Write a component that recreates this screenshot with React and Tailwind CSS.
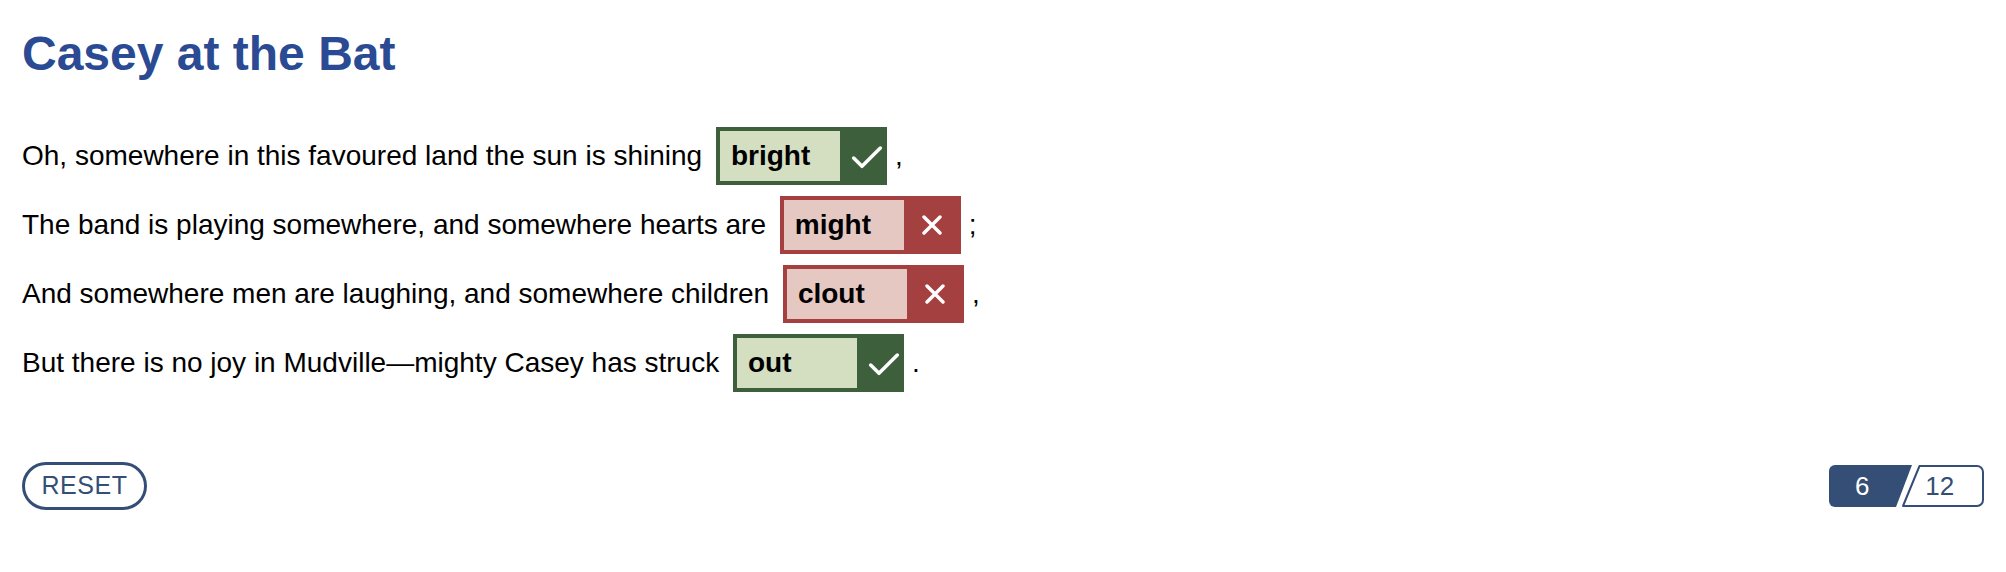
import React from 'react';
import { Check } from 'lucide-react';

const lines = [
  { before: 'Oh, somewhere in this favoured land the sun is shining', word: 'bright', correct: true, after: ',' },
  { before: 'The band is playing somewhere, and somewhere hearts are', word: 'might', correct: false, after: ';' },
  { before: 'And somewhere men are laughing, and somewhere children', word: 'clout', correct: false, after: ',' },
  { before: 'But there is no joy in Mudville\u2014mighty Casey has struck', word: 'out', correct: true, after: '.' },
];

const CrossMark = () => (
  <svg width="20" height="20" viewBox="0 0 20 20" className="shrink-0 ml-[18px]">
    <path d="M2 2 L18 18 M18 2 L2 18" fill="none" stroke="white" strokeWidth="3.4" strokeLinecap="round" />
  </svg>
);

const Blank = ({ word, correct }) => {
  const tone = correct
    ? 'border-[#3e5f3c] bg-[#3e5f3c]'
    : 'border-[#a54040] bg-[#a54040]';
  const fill = correct ? 'bg-[#d4dec0]' : 'bg-[#e5c8c2]';

  return (
    <div className={`flex h-[58px] ml-[6px] mr-[8px] border-4 border-r-0 ${tone}`}>
      <div className={`w-[120px] h-[50px] flex items-center pl-[11px] font-bold text-black ${fill}`}>
        {word}
      </div>
      <div className={`flex items-center ${correct ? 'w-[47px]' : 'w-[57px]'}`}>
        {correct ? (
          <Check size={40} strokeWidth={2.1} color="white" className="shrink-0 ml-[7px] mt-[3px]" />
        ) : (
          <CrossMark />
        )}
      </div>
    </div>
  );
};

const Pager = ({ current, total }) => (
  <div className="relative w-[155px] h-[42px] text-[26px]">
    <svg width="155" height="42" viewBox="0 0 155 42" className="absolute inset-0">
      <path d="M6 0 H83 L67 42 H6 A6 6 0 0 1 0 36 V6 A6 6 0 0 1 6 0 Z" fill="#344e76" />
      <path
        d="M90.5 1 H148 A6 6 0 0 1 154 7 V35 A6 6 0 0 1 148 41 H74 Z"
        fill="white"
        stroke="#344e76"
        strokeWidth="2"
        strokeLinejoin="round"
      />
    </svg>
    <div className="relative flex h-full items-center">
      <span className="w-[72px] text-center text-white">{current}</span>
      <span className="w-[96px] text-center text-[#344e76]">{total}</span>
    </div>
  </div>
);

export default function App() {
  return (
    <div className="min-h-[572px] bg-white px-[22px] pt-[26px] font-['Liberation_Sans',Arial,sans-serif]">
      <h1 className="text-[48px] leading-[56px] font-bold text-[#2b4a94]">Casey at the Bat</h1>

      <div className="mt-[45px] flex flex-col gap-[11px] text-[28px] text-black">
        {lines.map((line) => (
          <div key={line.word} className="flex items-center h-[58px] whitespace-pre">
            <span>{line.before} </span>
            <Blank word={line.word} correct={line.correct} />
            <span>{line.after}</span>
          </div>
        ))}
      </div>

      <div className="mt-[70px] flex items-center justify-between">
        <button className="w-[125px] h-[48px] rounded-full border-[3px] border-[#344e76] text-[25px] tracking-[0.5px] text-[#344e76] flex items-center justify-center">
          RESET
        </button>
        <Pager current={6} total={12} />
      </div>
    </div>
  );
}
